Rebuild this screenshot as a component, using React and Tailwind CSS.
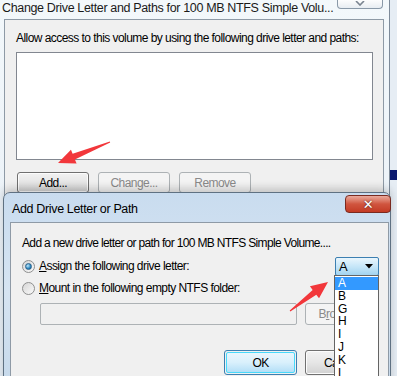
import React from 'react'

const arrowPoints = (tx, ty, px, py, headLen = 17, headW = 15, w0 = 1, w1 = 6) => {
  const dx = px - tx
  const dy = py - ty
  const len = Math.hypot(dx, dy)
  const ux = dx / len
  const uy = dy / len
  const nx = -uy
  const ny = ux
  const bx = px - ux * headLen
  const by = py - uy * headLen
  const pts = [
    [tx + (nx * w0) / 2, ty + (ny * w0) / 2],
    [bx + (nx * w1) / 2, by + (ny * w1) / 2],
    [bx + (nx * headW) / 2, by + (ny * headW) / 2],
    [px, py],
    [bx - (nx * headW) / 2, by - (ny * headW) / 2],
    [bx - (nx * w1) / 2, by - (ny * w1) / 2],
    [tx - (nx * w0) / 2, ty - (ny * w0) / 2],
  ]
  return pts.map(p => p.join(',')).join(' ')
}

const Button = ({ children, disabled, primary, className = '' }) => {
  if (disabled) {
    return (
      <div className={`flex items-center justify-center rounded-[3px] border border-[#adb2b5] bg-[#f4f4f4] text-[#8a8a8a] ${className}`}>
        {children}
      </div>
    )
  }
  if (primary) {
    return (
      <div className={`rounded-[3px] border border-[#3c7fb1] p-px ${className}`}>
        <div className="flex h-full items-center justify-center rounded-[2px] border border-[#48d9fb] bg-gradient-to-b from-[#eaf6fd] via-[#d9f0fc] to-[#b4dff7]">
          {children}
        </div>
      </div>
    )
  }
  return (
    <div className={`flex items-center justify-center rounded-[3px] border border-[#707070] bg-gradient-to-b from-[#f2f2f2] via-[#e6e6e6] to-[#d2d2d2] shadow-[inset_0_0_0_1px_#fcfcfc] ${className}`}>
      {children}
    </div>
  )
}

const Radio = ({ checked }) => (
  <div className="flex h-[13px] w-[13px] items-center justify-center rounded-full border border-[#8e8f8f] bg-gradient-to-br from-[#d6d6d6] to-[#fafafa]">
    {checked && (
      <div className="h-[7px] w-[7px] rounded-full border border-[#2c628b] bg-[radial-gradient(circle_at_35%_35%,#c0e8fa,#2a86c0_60%,#0e4d79)]" />
    )}
  </div>
)

const letters = ['A', 'B', 'G', 'H', 'I', 'J', 'K', 'L']

export default function App() {
  return (
    <div className="relative h-[376px] w-[397px] overflow-hidden bg-[#e6edf4] font-['Liberation_Sans',sans-serif] text-[12px] tracking-[-0.55px] text-black">
      {/* desktop strip on the right */}
      <div className="absolute right-0 top-[170px] h-[10px] w-[7px] bg-[#0b1a6e]" />

      {/* outer window */}
      <div className="relative h-[376px] w-[390px] border-r border-[#7d8a99] bg-gradient-to-b from-[#f3f8fb] to-[#e6eef6]">
        <div className="flex h-[19px] items-start">
          <div className="pl-[2px] pt-[1px] text-[12.5px] leading-[14px] tracking-[-0.35px] text-[#1a1a1a]">
            Change Drive Letter and Paths for 100 MB NTFS Simple Volu...
          </div>
          <div className="ml-auto mr-[6px] flex h-[9px] w-[46px] items-end justify-center rounded-b-[4px] border border-t-0 border-[#8a99a8] bg-gradient-to-b from-[#fdfdfd] to-[#e8edf2] pb-[2px]">
            <svg width="10" height="5" viewBox="0 0 10 5">
              <path d="M1 0L5 4L9 0" fill="none" stroke="#7a8490" strokeWidth="1.6" />
            </svg>
          </div>
        </div>

        <div className="ml-[4px] h-[200px] w-[380px] border border-[#8e9aa6] bg-[#f0f0f0] pl-[11px] pt-[11px]">
          <div className="leading-[15px]">Allow access to this volume by using the following drive letter and paths:</div>
          <div className="mt-[6px] h-[108px] w-[357px] border border-[#828790] bg-white" />
          <div className="ml-px mt-[12px] flex gap-[9px]">
            <Button className="h-[21px] w-[72px]">Add...</Button>
            <Button disabled className="h-[21px] w-[72px]">Change...</Button>
            <Button disabled className="h-[21px] w-[72px]">Remove</Button>
          </div>
        </div>
      </div>

      {/* inner dialog */}
      <div className="absolute left-[3px] top-[192px] h-[200px] w-[388px] rounded-t-[7px] border border-[#5f7182] bg-gradient-to-b from-[#c9dcef] via-[#d6e4f2] to-[#c5d8ea] shadow-[0_-4px_8px_rgba(0,0,0,0.18)]">
        <div className="flex h-[29px] items-start">
          <div className="pl-[8px] pt-[9px] text-[12.5px] leading-[15px] tracking-[-0.35px]">Add Drive Letter or Path</div>
          <div className="ml-auto mr-[-1px] mt-[2px] flex h-[18px] w-[46px] items-center justify-center rounded-[4px] border border-[#7a2a20] bg-gradient-to-b from-[#e9a99c] via-[#d0553f] to-[#c33a24]">
            <span className="font-['DejaVu_Sans',sans-serif] text-[13px] font-bold leading-[13px] text-white [text-shadow:0_0_2px_#3d1a14]">✕</span>
          </div>
        </div>
        <div className="ml-[6px] h-[170px] w-[379px] border border-[#8e9aa6] bg-[#f0f0f0] pl-[11px] pt-[13px]">
          <div className="leading-[15px] tracking-[-0.65px]">Add a new drive letter or path for 100 MB NTFS Simple Volume....</div>

          <div className="mt-[6px] flex h-[19px] items-center">
            <Radio checked />
            <div className="ml-[4px] leading-[15px]"><span className="underline">A</span>ssign the following drive letter:</div>
            <div className="ml-auto mr-[9px] flex h-[19px] w-[44px] items-center rounded-[2px] border border-[#3c7fb1] bg-gradient-to-b from-[#eaf6fd] via-[#c6e6f8] to-[#a2d3f0] pl-[3px] pr-[5px]">
              <span className="text-[13px]">A</span>
              <svg className="ml-auto" width="8" height="5" viewBox="0 0 8 5"><path d="M0 0h8L4 4.5z" fill="#000" /></svg>
            </div>
          </div>

          <div className="mt-[5px] flex h-[15px] items-center">
            <Radio />
            <div className="ml-[4px] leading-[15px]"><span className="underline">M</span>ount in the following empty NTFS folder:</div>
          </div>

          <div className="ml-[18px] mt-[7px] flex gap-[8px]">
            <div className="h-[22px] w-[257px] rounded-[2px] border border-[#adb2b5] bg-[#f0f0f0]" />
            <Button disabled className="h-[22px] w-[72px]">B<span className="underline">r</span>owse...</Button>
          </div>

          <div className="ml-[202px] mt-[25px] flex gap-[8px]">
            <Button primary className="h-[25px] w-[73px]">OK</Button>
            <Button className="h-[25px] w-[72px]">Cancel</Button>
          </div>
        </div>
      </div>

      {/* drop-down list */}
      <div className="absolute left-[334px] top-[275px] h-[110px] w-[45px] border border-[#646464] bg-white pt-px text-[12px] tracking-normal">
        {letters.map((l, i) => (
          <div
            key={l}
            className={`h-[12.8px] pl-[3px] leading-[12.8px] ${i === 0 ? 'bg-[#3399ff] text-white' : 'text-black'}`}
          >
            {l}
          </div>
        ))}
      </div>

      {/* red arrows */}
      <svg className="pointer-events-none absolute left-0 top-0" width="397" height="376">
        <polygon points={arrowPoints(110, 142, 58, 163)} fill="#f2373b" />
        <polygon points={arrowPoints(290, 311, 328, 282)} fill="#f2373b" />
      </svg>
    </div>
  )
}
